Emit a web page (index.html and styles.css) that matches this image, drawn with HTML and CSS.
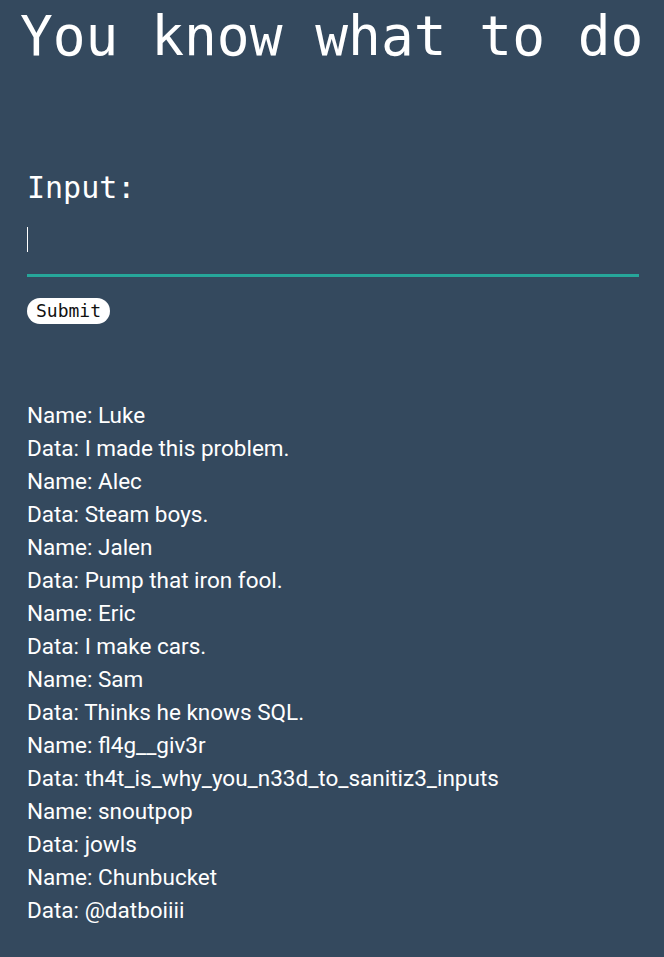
FILE: index.html
```html
<!DOCTYPE html>
<html>
<head>
<meta charset="utf-8">
<link rel="stylesheet" href="styles.css">
</head>
<body>
<h1 class="title">You know what to do</h1>
<main class="page">
  <form class="form">
    <label class="label" for="q">Input:</label>
    <div class="field-wrap">
      <input class="field" id="q" type="text">
      <span class="caret"></span>
    </div>
    <button class="submit" type="button">Submit</button>
  </form>
  <ul class="records">
    <li>Name: Luke</li>
    <li>Data: I made this problem.</li>
    <li>Name: Alec</li>
    <li>Data: Steam boys.</li>
    <li>Name: Jalen</li>
    <li>Data: Pump that iron fool.</li>
    <li>Name: Eric</li>
    <li>Data: I make cars.</li>
    <li>Name: Sam</li>
    <li>Data: Thinks he knows SQL.</li>
    <li>Name: fl4g__giv3r</li>
    <li>Data: th4t_is_why_you_n33d_to_sanitiz3_inputs</li>
    <li>Name: snoutpop</li>
    <li>Data: jowls</li>
    <li>Name: Chunbucket</li>
    <li>Data: @datboiiii</li>
  </ul>
</main>
</body>
</html>
```
FILE: styles.css
```css
html, body {
  margin: 0;
  padding: 0;
  background: #34495e;
  color: #ffffff;
  height: 100%;
}
body {
  overflow: hidden;
}
.title {
  margin: 5px 0 0 20px;
  font-family: "DejaVu Sans Mono", monospace;
  font-weight: normal;
  font-size: 54.5px;
  line-height: 63px;
  white-space: nowrap;
}
.page {
  padding: 0 25px 0 27px;
}
.form {
  display: flex;
  flex-direction: column;
  align-items: flex-start;
  margin-top: 102px;
}
.label {
  font-family: "DejaVu Sans Mono", monospace;
  font-size: 30px;
  line-height: 35px;
}
.field-wrap {
  position: relative;
  width: 100%;
  margin-top: 19px;
}
.field {
  display: block;
  box-sizing: border-box;
  width: 100%;
  height: 53px;
  padding: 0;
  border: 0;
  border-bottom: 3px solid #26a69a;
  background: transparent;
  color: #fff;
  caret-color: #fff;
  font-family: "DejaVu Sans Mono", monospace;
  font-size: 24px;
  outline: none;
}
.caret {
  position: absolute;
  left: 0;
  top: 3px;
  width: 1px;
  height: 25px;
  background: #ffffff;
}
.submit {
  margin-top: 21px;
  height: 26px;
  padding: 0 9px;
  border: 0;
  border-radius: 13px;
  background: #ffffff;
  color: #111;
  font-family: "DejaVu Sans Mono", monospace;
  font-size: 18px;
  line-height: 26px;
}
.records {
  list-style: none;
  margin: 75px 0 0 0;
  padding: 0;
  font-family: Roboto, sans-serif;
  font-size: 22.5px;
  line-height: 33px;
}
```
